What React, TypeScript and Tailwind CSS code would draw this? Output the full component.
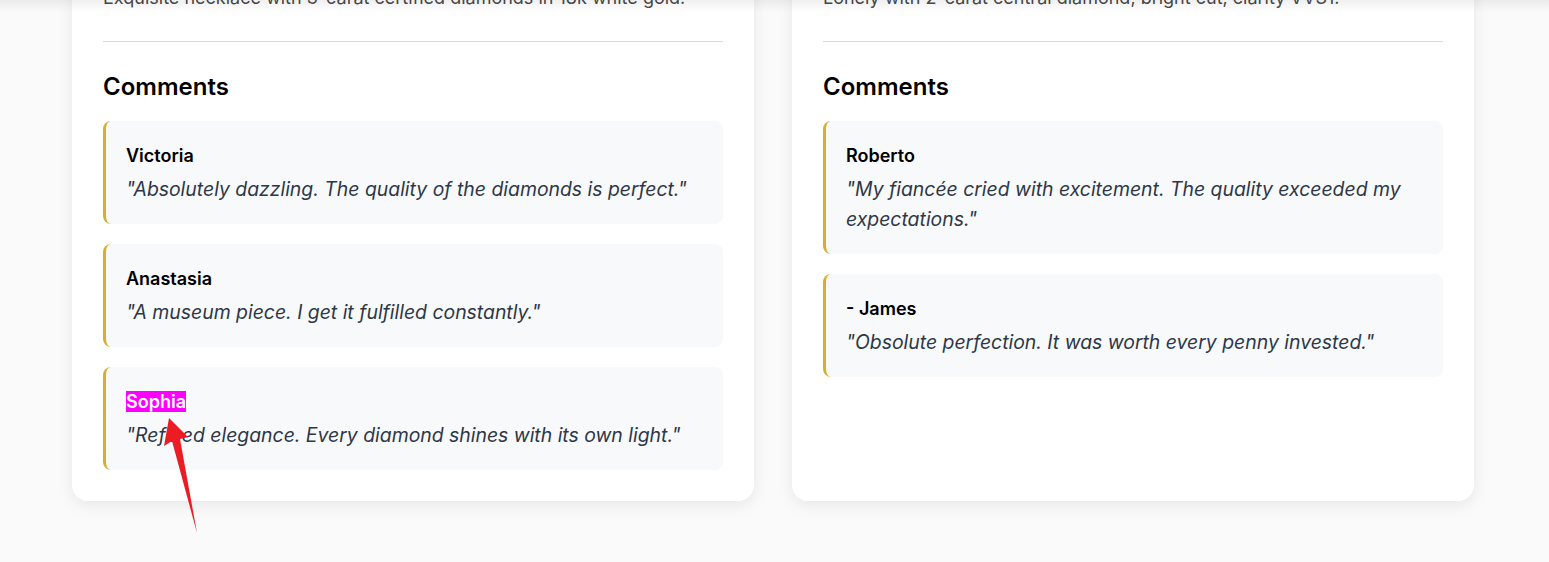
import React from "react";

type Comment = { name: string; text: string; mark?: boolean };

const products: { desc: string; comments: Comment[] }[] = [
  {
    desc: "Exquisite necklace with 3-carat certified diamonds in 18k white gold.",
    comments: [
      { name: "Victoria", text: "\"Absolutely dazzling. The quality of the diamonds is perfect.\"" },
      { name: "Anastasia", text: "\"A museum piece. I get it fulfilled constantly.\"" },
      { name: "Sophia", text: "\"Refined elegance. Every diamond shines with its own light.\"", mark: true },
    ],
  },
  {
    desc: "Lonely with 2-carat central diamond, bright cut, clarity VVS1.",
    comments: [
      { name: "Roberto", text: "\"My fiancée cried with excitement. The quality exceeded my expectations.\"" },
      { name: "- James", text: "\"Obsolute perfection. It was worth every penny invested.\"" },
    ],
  },
];

function CommentBox({ c }: { c: Comment }) {
  return (
    <div className="rounded-lg border-l-[3px] border-[#d4af37] bg-[#f8f9fa] px-5 pb-5 pt-[21px]">
      <div className="text-lg font-semibold leading-[27px] text-black">
        {c.mark ? <span className="bg-[#f0f] text-white">{c.name}</span> : c.name}
      </div>
      <p className="mt-[5px] text-[19.4px] italic leading-[30px] text-[#2d3748]">{c.text}</p>
    </div>
  );
}

export default function App() {
  return (
    <div
      className="relative h-[562px] w-[1549px] overflow-hidden bg-[#fafafa]"
      style={{ fontFamily: "Inter, 'Noto Sans', sans-serif" }}
    >
      <div className="-mt-[47px] flex gap-[38px] px-[72px]">
        {products.map((p, i) => (
          <div
            key={i}
            className="w-[682px] rounded-2xl bg-white px-[31px] pb-[31px] pt-[31px] shadow-[0_4px_16px_rgba(0,0,0,0.08)]"
          >
            <p className="text-lg leading-7 text-[#4a4a4a]">{p.desc}</p>
            <div className="mt-[29px] border-t border-[#d9d9d9] pt-[29px]">
              <h3 className="mb-[18px] text-2xl font-semibold leading-8 text-black">Comments</h3>
              <div className="flex flex-col gap-5">
                {p.comments.map((c) => (
                  <CommentBox key={c.name} c={c} />
                ))}
              </div>
            </div>
          </div>
        ))}
      </div>

      <div className="pointer-events-none absolute left-0 top-0 h-[12px] w-full bg-gradient-to-b from-black/[0.06] to-transparent" />

      <svg className="pointer-events-none absolute left-0 top-0" width="1549" height="562">
        <polygon
          points="169,418 188,437 180,439 197,533 172,441 164,446"
          fill="#ec1c24"
        />
      </svg>
    </div>
  );
}
